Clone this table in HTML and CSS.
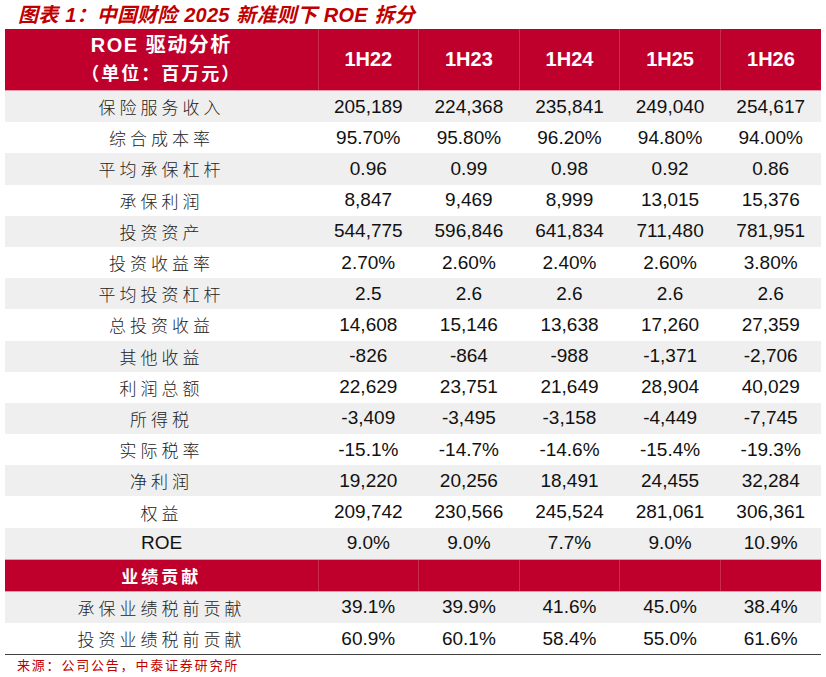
FILE: index.html
```html
<!DOCTYPE html>
<html lang="zh-CN">
<head>
<meta charset="utf-8">
<title>图表 1</title>
<link rel="stylesheet" href="styles.css">
</head>
<body>
<div class="page">
  <div class="title">图表 1：中国财险 2025 新准则下 ROE 拆分</div>
  <table class="grid">
    <colgroup>
      <col class="c-label"><col class="c-num"><col class="c-num"><col class="c-num"><col class="c-num"><col class="c-num">
    </colgroup>
    <thead>
      <tr class="head">
        <th class="lbl"><div class="main">ROE 驱动分析</div><div class="unit">（单位：百万元）</div></th>
        <th>1H22</th><th>1H23</th><th>1H24</th><th>1H25</th><th>1H26</th>
      </tr>
    </thead>
    <tbody>
      <tr class="g"><td class="lbl">保险服务收入</td><td>205,189</td><td>224,368</td><td>235,841</td><td>249,040</td><td>254,617</td></tr>
      <tr><td class="lbl">综合成本率</td><td>95.70%</td><td>95.80%</td><td>96.20%</td><td>94.80%</td><td>94.00%</td></tr>
      <tr class="g"><td class="lbl">平均承保杠杆</td><td>0.96</td><td>0.99</td><td>0.98</td><td>0.92</td><td>0.86</td></tr>
      <tr><td class="lbl">承保利润</td><td>8,847</td><td>9,469</td><td>8,999</td><td>13,015</td><td>15,376</td></tr>
      <tr class="g"><td class="lbl">投资资产</td><td>544,775</td><td>596,846</td><td>641,834</td><td>711,480</td><td>781,951</td></tr>
      <tr><td class="lbl">投资收益率</td><td>2.70%</td><td>2.60%</td><td>2.40%</td><td>2.60%</td><td>3.80%</td></tr>
      <tr class="g"><td class="lbl">平均投资杠杆</td><td>2.5</td><td>2.6</td><td>2.6</td><td>2.6</td><td>2.6</td></tr>
      <tr><td class="lbl">总投资收益</td><td>14,608</td><td>15,146</td><td>13,638</td><td>17,260</td><td>27,359</td></tr>
      <tr class="g"><td class="lbl">其他收益</td><td>-826</td><td>-864</td><td>-988</td><td>-1,371</td><td>-2,706</td></tr>
      <tr><td class="lbl">利润总额</td><td>22,629</td><td>23,751</td><td>21,649</td><td>28,904</td><td>40,029</td></tr>
      <tr class="g"><td class="lbl">所得税</td><td>-3,409</td><td>-3,495</td><td>-3,158</td><td>-4,449</td><td>-7,745</td></tr>
      <tr><td class="lbl">实际税率</td><td>-15.1%</td><td>-14.7%</td><td>-14.6%</td><td>-15.4%</td><td>-19.3%</td></tr>
      <tr class="g"><td class="lbl">净利润</td><td>19,220</td><td>20,256</td><td>18,491</td><td>24,455</td><td>32,284</td></tr>
      <tr><td class="lbl">权益</td><td>209,742</td><td>230,566</td><td>245,524</td><td>281,061</td><td>306,361</td></tr>
      <tr class="g"><td class="lbl roe">ROE</td><td>9.0%</td><td>9.0%</td><td>7.7%</td><td>9.0%</td><td>10.9%</td></tr>
      <tr class="section"><td class="lbl">业绩贡献</td><td></td><td></td><td></td><td></td><td></td></tr>
      <tr class="g"><td class="lbl">承保业绩税前贡献</td><td>39.1%</td><td>39.9%</td><td>41.6%</td><td>45.0%</td><td>38.4%</td></tr>
      <tr class="last"><td class="lbl">投资业绩税前贡献</td><td>60.9%</td><td>60.1%</td><td>58.4%</td><td>55.0%</td><td>61.6%</td></tr>
    </tbody>
  </table>
  <div class="source">来源：公司公告，中泰证券研究所</div>
</div>
</body>
</html>
```
FILE: styles.css
```css
html, body {
  margin: 0;
  padding: 0;
  background: #ffffff;
}
.page {
  width: 826px;
  padding-left: 5px;
  font-family: "Liberation Sans", "Noto Sans CJK SC", sans-serif;
}
.title {
  height: 29px;
  line-height: 31px;
  padding-left: 13px;
  color: #c00000;
  font-size: 20px;
  font-weight: bold;
  font-style: italic;
  letter-spacing: 0.2px;
  word-spacing: 1px;
  font-family: "Liberation Sans", "Noto Sans CJK SC", sans-serif;
  white-space: nowrap;
}
.grid {
  width: 816px;
  border-collapse: collapse;
  table-layout: fixed;
}
.c-label { width: 313px; }
.c-num { width: 100.6px; }
.grid th, .grid td {
  padding: 0;
  text-align: center;
  vertical-align: middle;
}
.head th {
  height: 61px;
  background: #c0002c;
  color: #ffffff;
  font-weight: bold;
  font-size: 20px;
  border-left: 1px solid #cb2b4f;
  border-bottom: 1px solid #e49aab;
}
.head th:first-child { border-left: none; }
.head th.lbl {
  font-size: 18px;
  line-height: 29px;
}
.head th.lbl .main {
  font-size: 20px;
  letter-spacing: 1.5px;
}
.head th.lbl .unit {
  letter-spacing: 2px;
}
.grid td {
  height: 31.2px;
  font-size: 19px;
  color: #111111;
}
.grid tr.g td { background: #efefef; }
.grid td.lbl {
  font-family: "Noto Sans CJK SC", sans-serif;
  font-size: 17px;
  letter-spacing: 4px;
  color: #222222;
  font-weight: 300;
}
.grid td.lbl.roe {
  font-family: "Liberation Sans", sans-serif;
  font-size: 19px;
  letter-spacing: 0;
  color: #111111;
}
.grid tr.section td {
  height: 31px;
  background: #c0002c;
  border-left: 1px solid #cb2b4f;
  border-top: 1px solid #e49aab;
  border-bottom: 1px solid #e49aab;
}
.grid tr.section td:first-child { border-left: none; }
.grid tr.section td.lbl {
  color: #ffffff;
  font-weight: bold;
  letter-spacing: 3px;
}
.grid tr.last td { border-bottom: 1.5px solid #404040; }
.source {
  padding-left: 12px;
  padding-top: 0;
  color: #c00000;
  font-size: 13px;
  letter-spacing: 1.8px;
  font-family: "Noto Sans CJK SC", sans-serif;
}
```
